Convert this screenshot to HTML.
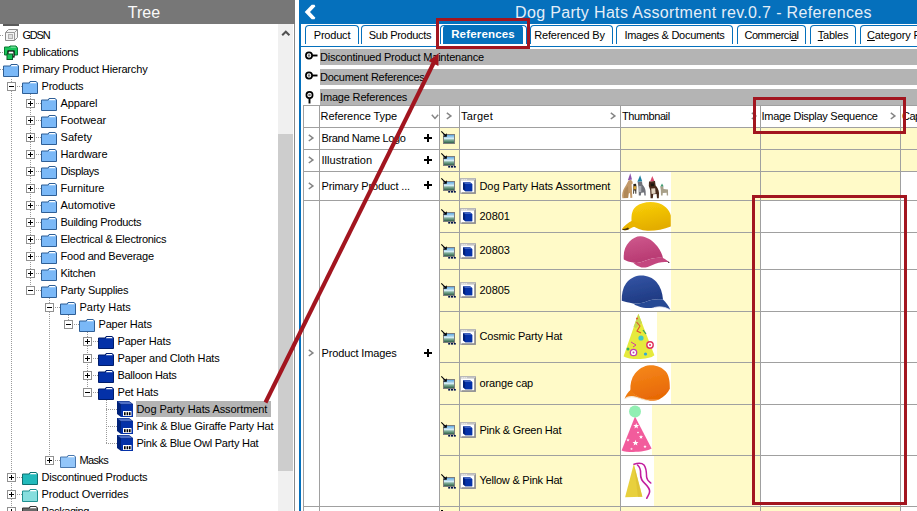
<!DOCTYPE html>
<html><head><meta charset="utf-8"><title>References</title>
<style>
html,body{margin:0;padding:0;}
body{width:917px;height:511px;overflow:hidden;background:#fff;position:relative;font-family:"Liberation Sans","DejaVu Sans",sans-serif;font-size:11px;color:#000;}
.a{position:absolute;}
.t{position:absolute;white-space:nowrap;line-height:17px;height:17px;letter-spacing:-0.12px;}
.hd{position:absolute;top:0;height:24px;line-height:24px;font-size:16px;white-space:nowrap;}
.tab{position:absolute;top:25px;height:19px;box-sizing:border-box;border:1px solid #0570bc;border-bottom:none;border-radius:4px 4px 0 0;background:#fff;text-align:center;line-height:19px;white-space:nowrap;letter-spacing:-0.12px;}
.band{position:absolute;left:320px;width:597px;height:16px;background:#b4b4b4;}
.y{position:absolute;background:#fffac8;}
.g{position:absolute;background:#a0a0a0;}
.w{position:absolute;background:#fff;}
.ch{position:absolute;color:#707070;font-size:11px;line-height:17px;}
svg{position:absolute;overflow:visible;}
</style></head>
<body>
<svg width="0" height="0" style="left:0;top:0"><defs><linearGradient id="pg" x1="0" y1="0" x2="0" y2="1"><stop offset="0" stop-color="#4f9fe0"/><stop offset="0.45" stop-color="#d4ecf4"/><stop offset="0.62" stop-color="#7fae98"/><stop offset="1" stop-color="#24553c"/></linearGradient></defs></svg>
<div class="a" style="left:0;top:0;width:295px;height:24px;background:#777"></div>
<div class="hd" style="left:0;top:1px;width:288px;text-align:center;color:#fafafa;">Tree</div>
<div class="a" style="left:278px;top:24px;width:15px;height:487px;background:#f0f0f0"></div>
<div class="a" style="left:278px;top:134px;width:15px;height:337px;background:#cdcdcd"></div>
<div class="a" style="left:294px;top:24px;width:1px;height:487px;background:#8a8a8a"></div>
<svg style="left:280px;top:29px" width="12" height="8" viewBox="0 0 12 8"><path d="M2.2 6.3 L5.8 2.7 L9.4 6.3" fill="none" stroke="#505050" stroke-width="2"/></svg>
<div class="a" style="left:3px;top:24px;width:16px;height:2px;background:#5a5a5a"></div>
<div class="a" style="left:11px;top:79px;width:1px;height:432px;background:repeating-linear-gradient(180deg,#9a9a9a 0 1px,transparent 1px 2px)"></div>
<div class="a" style="left:30px;top:94px;width:1px;height:196px;background:repeating-linear-gradient(180deg,#9a9a9a 0 1px,transparent 1px 2px)"></div>
<div class="a" style="left:49px;top:298px;width:1px;height:162px;background:repeating-linear-gradient(180deg,#9a9a9a 0 1px,transparent 1px 2px)"></div>
<div class="a" style="left:68px;top:315px;width:1px;height:9px;background:repeating-linear-gradient(180deg,#9a9a9a 0 1px,transparent 1px 2px)"></div>
<div class="a" style="left:87px;top:332px;width:1px;height:60px;background:repeating-linear-gradient(180deg,#9a9a9a 0 1px,transparent 1px 2px)"></div>
<div class="a" style="left:106px;top:400px;width:1px;height:44px;background:repeating-linear-gradient(180deg,#9a9a9a 0 1px,transparent 1px 2px)"></div>
<div class="a" style="left:0px;top:35px;width:3px;height:1px;background:repeating-linear-gradient(90deg,#9a9a9a 0 1px,transparent 1px 2px)"></div>
<svg style="left:5px;top:29px" width="13" height="12" viewBox="0 0 13 12"><path d="M0.5 3.5 L3.5 0.5 H12.5 V8.5 L9.5 11.5 H0.5 Z" fill="#f4f4f4" stroke="#8c8c8c"/><path d="M0.5 3.5 H9.5 V11.5 M9.5 3.5 L12.5 0.5" fill="none" stroke="#9a9a9a"/><rect x="3.5" y="5.5" width="4" height="4" fill="#e0e0e0" stroke="#b0b0b0"/></svg>
<div class="t" style="left:22.5px;top:27px;letter-spacing:-1.220px;">GDSN</div>
<div class="a" style="left:0px;top:52px;width:3px;height:1px;background:repeating-linear-gradient(90deg,#9a9a9a 0 1px,transparent 1px 2px)"></div>
<svg style="left:4px;top:45px" width="15" height="15" viewBox="0 0 15 15"><path d="M0.5 2 H5 L6 1 H12 L13.5 3 V10 H0.5 Z" fill="#19c45a" stroke="#0b7a33"/><path d="M7 1.8 H11.5 L12 2.6 H6.5Z" fill="#b8f0c8"/><rect x="4" y="6" width="6" height="6" fill="#fff" stroke="#000" stroke-width="1.2"/><rect x="3" y="9" width="5.5" height="5.5" fill="#19c45a" stroke="#0a5a25"/></svg>
<div class="t" style="left:22.5px;top:44px;letter-spacing:-0.286px;">Publications</div>
<div class="a" style="left:0px;top:69px;width:3px;height:1px;background:repeating-linear-gradient(90deg,#9a9a9a 0 1px,transparent 1px 2px)"></div>
<svg style="left:3px;top:64px" width="16" height="13" viewBox="0 0 16 13"><path d="M0.5 2 H7.2 L8 0.5 H14.2 L15.5 2 V12.5 H0.5 Z" fill="#7ab8f7" stroke="#2f5f96" stroke-width="1"/><path d="M8.6 1 H13.8 L14.7 2.2 H7.9 Z" fill="#fff"/></svg>
<div class="t" style="left:22.5px;top:61px;letter-spacing:-0.159px;">Primary Product Hierarchy</div>
<div class="a" style="left:11px;top:86px;width:11px;height:1px;background:repeating-linear-gradient(90deg,#9a9a9a 0 1px,transparent 1px 2px)"></div>
<svg style="left:7px;top:82px" width="9" height="9" viewBox="0 0 9 9"><rect x="0.5" y="0.5" width="8" height="8" fill="#fff" stroke="#919191"/><path d="M2 4.5 H7" stroke="#000"/></svg>
<svg style="left:22px;top:81px" width="16" height="13" viewBox="0 0 16 13"><path d="M0.5 2 H7.2 L8 0.5 H14.2 L15.5 2 V12.5 H0.5 Z" fill="#7ab8f7" stroke="#2f5f96" stroke-width="1"/><path d="M8.6 1 H13.8 L14.7 2.2 H7.9 Z" fill="#fff"/></svg>
<div class="t" style="left:41.5px;top:78px;letter-spacing:-0.190px;">Products</div>
<div class="a" style="left:30px;top:103px;width:11px;height:1px;background:repeating-linear-gradient(90deg,#9a9a9a 0 1px,transparent 1px 2px)"></div>
<svg style="left:26px;top:99px" width="9" height="9" viewBox="0 0 9 9"><rect x="0.5" y="0.5" width="8" height="8" fill="#fff" stroke="#919191"/><path d="M2 4.5 H7" stroke="#000"/><path d="M4.5 2 V7" stroke="#000"/></svg>
<svg style="left:41px;top:98px" width="16" height="13" viewBox="0 0 16 13"><path d="M0.5 2 H7.2 L8 0.5 H14.2 L15.5 2 V12.5 H0.5 Z" fill="#7ab8f7" stroke="#2f5f96" stroke-width="1"/><path d="M8.6 1 H13.8 L14.7 2.2 H7.9 Z" fill="#fff"/></svg>
<div class="t" style="left:60.5px;top:95px;letter-spacing:-0.146px;">Apparel</div>
<div class="a" style="left:30px;top:120px;width:11px;height:1px;background:repeating-linear-gradient(90deg,#9a9a9a 0 1px,transparent 1px 2px)"></div>
<svg style="left:26px;top:116px" width="9" height="9" viewBox="0 0 9 9"><rect x="0.5" y="0.5" width="8" height="8" fill="#fff" stroke="#919191"/><path d="M2 4.5 H7" stroke="#000"/><path d="M4.5 2 V7" stroke="#000"/></svg>
<svg style="left:41px;top:115px" width="16" height="13" viewBox="0 0 16 13"><path d="M0.5 2 H7.2 L8 0.5 H14.2 L15.5 2 V12.5 H0.5 Z" fill="#7ab8f7" stroke="#2f5f96" stroke-width="1"/><path d="M8.6 1 H13.8 L14.7 2.2 H7.9 Z" fill="#fff"/></svg>
<div class="t" style="left:60.5px;top:112px;letter-spacing:-0.032px;">Footwear</div>
<div class="a" style="left:30px;top:137px;width:11px;height:1px;background:repeating-linear-gradient(90deg,#9a9a9a 0 1px,transparent 1px 2px)"></div>
<svg style="left:26px;top:133px" width="9" height="9" viewBox="0 0 9 9"><rect x="0.5" y="0.5" width="8" height="8" fill="#fff" stroke="#919191"/><path d="M2 4.5 H7" stroke="#000"/><path d="M4.5 2 V7" stroke="#000"/></svg>
<svg style="left:41px;top:132px" width="16" height="13" viewBox="0 0 16 13"><path d="M0.5 2 H7.2 L8 0.5 H14.2 L15.5 2 V12.5 H0.5 Z" fill="#7ab8f7" stroke="#2f5f96" stroke-width="1"/><path d="M8.6 1 H13.8 L14.7 2.2 H7.9 Z" fill="#fff"/></svg>
<div class="t" style="left:60.5px;top:129px;letter-spacing:0.069px;">Safety</div>
<div class="a" style="left:30px;top:154px;width:11px;height:1px;background:repeating-linear-gradient(90deg,#9a9a9a 0 1px,transparent 1px 2px)"></div>
<svg style="left:26px;top:150px" width="9" height="9" viewBox="0 0 9 9"><rect x="0.5" y="0.5" width="8" height="8" fill="#fff" stroke="#919191"/><path d="M2 4.5 H7" stroke="#000"/><path d="M4.5 2 V7" stroke="#000"/></svg>
<svg style="left:41px;top:149px" width="16" height="13" viewBox="0 0 16 13"><path d="M0.5 2 H7.2 L8 0.5 H14.2 L15.5 2 V12.5 H0.5 Z" fill="#7ab8f7" stroke="#2f5f96" stroke-width="1"/><path d="M8.6 1 H13.8 L14.7 2.2 H7.9 Z" fill="#fff"/></svg>
<div class="t" style="left:60.5px;top:146px;letter-spacing:-0.098px;">Hardware</div>
<div class="a" style="left:30px;top:171px;width:11px;height:1px;background:repeating-linear-gradient(90deg,#9a9a9a 0 1px,transparent 1px 2px)"></div>
<svg style="left:26px;top:167px" width="9" height="9" viewBox="0 0 9 9"><rect x="0.5" y="0.5" width="8" height="8" fill="#fff" stroke="#919191"/><path d="M2 4.5 H7" stroke="#000"/><path d="M4.5 2 V7" stroke="#000"/></svg>
<svg style="left:41px;top:166px" width="16" height="13" viewBox="0 0 16 13"><path d="M0.5 2 H7.2 L8 0.5 H14.2 L15.5 2 V12.5 H0.5 Z" fill="#7ab8f7" stroke="#2f5f96" stroke-width="1"/><path d="M8.6 1 H13.8 L14.7 2.2 H7.9 Z" fill="#fff"/></svg>
<div class="t" style="left:60.5px;top:163px;letter-spacing:-0.385px;">Displays</div>
<div class="a" style="left:30px;top:188px;width:11px;height:1px;background:repeating-linear-gradient(90deg,#9a9a9a 0 1px,transparent 1px 2px)"></div>
<svg style="left:26px;top:184px" width="9" height="9" viewBox="0 0 9 9"><rect x="0.5" y="0.5" width="8" height="8" fill="#fff" stroke="#919191"/><path d="M2 4.5 H7" stroke="#000"/><path d="M4.5 2 V7" stroke="#000"/></svg>
<svg style="left:41px;top:183px" width="16" height="13" viewBox="0 0 16 13"><path d="M0.5 2 H7.2 L8 0.5 H14.2 L15.5 2 V12.5 H0.5 Z" fill="#7ab8f7" stroke="#2f5f96" stroke-width="1"/><path d="M8.6 1 H13.8 L14.7 2.2 H7.9 Z" fill="#fff"/></svg>
<div class="t" style="left:60.5px;top:180px;letter-spacing:-0.015px;">Furniture</div>
<div class="a" style="left:30px;top:205px;width:11px;height:1px;background:repeating-linear-gradient(90deg,#9a9a9a 0 1px,transparent 1px 2px)"></div>
<svg style="left:26px;top:201px" width="9" height="9" viewBox="0 0 9 9"><rect x="0.5" y="0.5" width="8" height="8" fill="#fff" stroke="#919191"/><path d="M2 4.5 H7" stroke="#000"/><path d="M4.5 2 V7" stroke="#000"/></svg>
<svg style="left:41px;top:200px" width="16" height="13" viewBox="0 0 16 13"><path d="M0.5 2 H7.2 L8 0.5 H14.2 L15.5 2 V12.5 H0.5 Z" fill="#7ab8f7" stroke="#2f5f96" stroke-width="1"/><path d="M8.6 1 H13.8 L14.7 2.2 H7.9 Z" fill="#fff"/></svg>
<div class="t" style="left:60.5px;top:197px;letter-spacing:-0.013px;">Automotive</div>
<div class="a" style="left:30px;top:222px;width:11px;height:1px;background:repeating-linear-gradient(90deg,#9a9a9a 0 1px,transparent 1px 2px)"></div>
<svg style="left:26px;top:218px" width="9" height="9" viewBox="0 0 9 9"><rect x="0.5" y="0.5" width="8" height="8" fill="#fff" stroke="#919191"/><path d="M2 4.5 H7" stroke="#000"/><path d="M4.5 2 V7" stroke="#000"/></svg>
<svg style="left:41px;top:217px" width="16" height="13" viewBox="0 0 16 13"><path d="M0.5 2 H7.2 L8 0.5 H14.2 L15.5 2 V12.5 H0.5 Z" fill="#7ab8f7" stroke="#2f5f96" stroke-width="1"/><path d="M8.6 1 H13.8 L14.7 2.2 H7.9 Z" fill="#fff"/></svg>
<div class="t" style="left:60.5px;top:214px;letter-spacing:-0.283px;">Building Products</div>
<div class="a" style="left:30px;top:239px;width:11px;height:1px;background:repeating-linear-gradient(90deg,#9a9a9a 0 1px,transparent 1px 2px)"></div>
<svg style="left:26px;top:235px" width="9" height="9" viewBox="0 0 9 9"><rect x="0.5" y="0.5" width="8" height="8" fill="#fff" stroke="#919191"/><path d="M2 4.5 H7" stroke="#000"/><path d="M4.5 2 V7" stroke="#000"/></svg>
<svg style="left:41px;top:234px" width="16" height="13" viewBox="0 0 16 13"><path d="M0.5 2 H7.2 L8 0.5 H14.2 L15.5 2 V12.5 H0.5 Z" fill="#7ab8f7" stroke="#2f5f96" stroke-width="1"/><path d="M8.6 1 H13.8 L14.7 2.2 H7.9 Z" fill="#fff"/></svg>
<div class="t" style="left:60.5px;top:231px;letter-spacing:-0.253px;">Electrical &amp; Electronics</div>
<div class="a" style="left:30px;top:256px;width:11px;height:1px;background:repeating-linear-gradient(90deg,#9a9a9a 0 1px,transparent 1px 2px)"></div>
<svg style="left:26px;top:252px" width="9" height="9" viewBox="0 0 9 9"><rect x="0.5" y="0.5" width="8" height="8" fill="#fff" stroke="#919191"/><path d="M2 4.5 H7" stroke="#000"/><path d="M4.5 2 V7" stroke="#000"/></svg>
<svg style="left:41px;top:251px" width="16" height="13" viewBox="0 0 16 13"><path d="M0.5 2 H7.2 L8 0.5 H14.2 L15.5 2 V12.5 H0.5 Z" fill="#7ab8f7" stroke="#2f5f96" stroke-width="1"/><path d="M8.6 1 H13.8 L14.7 2.2 H7.9 Z" fill="#fff"/></svg>
<div class="t" style="left:60.5px;top:248px;letter-spacing:-0.191px;">Food and Beverage</div>
<div class="a" style="left:30px;top:273px;width:11px;height:1px;background:repeating-linear-gradient(90deg,#9a9a9a 0 1px,transparent 1px 2px)"></div>
<svg style="left:26px;top:269px" width="9" height="9" viewBox="0 0 9 9"><rect x="0.5" y="0.5" width="8" height="8" fill="#fff" stroke="#919191"/><path d="M2 4.5 H7" stroke="#000"/><path d="M4.5 2 V7" stroke="#000"/></svg>
<svg style="left:41px;top:268px" width="16" height="13" viewBox="0 0 16 13"><path d="M0.5 2 H7.2 L8 0.5 H14.2 L15.5 2 V12.5 H0.5 Z" fill="#7ab8f7" stroke="#2f5f96" stroke-width="1"/><path d="M8.6 1 H13.8 L14.7 2.2 H7.9 Z" fill="#fff"/></svg>
<div class="t" style="left:60.5px;top:265px;letter-spacing:-0.258px;">Kitchen</div>
<div class="a" style="left:30px;top:290px;width:11px;height:1px;background:repeating-linear-gradient(90deg,#9a9a9a 0 1px,transparent 1px 2px)"></div>
<svg style="left:26px;top:286px" width="9" height="9" viewBox="0 0 9 9"><rect x="0.5" y="0.5" width="8" height="8" fill="#fff" stroke="#919191"/><path d="M2 4.5 H7" stroke="#000"/></svg>
<svg style="left:41px;top:285px" width="16" height="13" viewBox="0 0 16 13"><path d="M0.5 2 H7.2 L8 0.5 H14.2 L15.5 2 V12.5 H0.5 Z" fill="#7ab8f7" stroke="#2f5f96" stroke-width="1"/><path d="M8.6 1 H13.8 L14.7 2.2 H7.9 Z" fill="#fff"/></svg>
<div class="t" style="left:60.5px;top:282px;letter-spacing:-0.224px;">Party Supplies</div>
<div class="a" style="left:49px;top:307px;width:11px;height:1px;background:repeating-linear-gradient(90deg,#9a9a9a 0 1px,transparent 1px 2px)"></div>
<svg style="left:45px;top:303px" width="9" height="9" viewBox="0 0 9 9"><rect x="0.5" y="0.5" width="8" height="8" fill="#fff" stroke="#919191"/><path d="M2 4.5 H7" stroke="#000"/></svg>
<svg style="left:60px;top:302px" width="16" height="13" viewBox="0 0 16 13"><path d="M0.5 2 H7.2 L8 0.5 H14.2 L15.5 2 V12.5 H0.5 Z" fill="#7ab8f7" stroke="#2f5f96" stroke-width="1"/><path d="M8.6 1 H13.8 L14.7 2.2 H7.9 Z" fill="#fff"/></svg>
<div class="t" style="left:79.5px;top:299px;letter-spacing:-0.006px;">Party Hats</div>
<div class="a" style="left:68px;top:324px;width:11px;height:1px;background:repeating-linear-gradient(90deg,#9a9a9a 0 1px,transparent 1px 2px)"></div>
<svg style="left:64px;top:320px" width="9" height="9" viewBox="0 0 9 9"><rect x="0.5" y="0.5" width="8" height="8" fill="#fff" stroke="#919191"/><path d="M2 4.5 H7" stroke="#000"/></svg>
<svg style="left:79px;top:319px" width="16" height="13" viewBox="0 0 16 13"><path d="M0.5 2 H7.2 L8 0.5 H14.2 L15.5 2 V12.5 H0.5 Z" fill="#7ab8f7" stroke="#2f5f96" stroke-width="1"/><path d="M8.6 1 H13.8 L14.7 2.2 H7.9 Z" fill="#fff"/></svg>
<div class="t" style="left:98.5px;top:316px;letter-spacing:-0.183px;">Paper Hats</div>
<div class="a" style="left:87px;top:341px;width:11px;height:1px;background:repeating-linear-gradient(90deg,#9a9a9a 0 1px,transparent 1px 2px)"></div>
<svg style="left:83px;top:337px" width="9" height="9" viewBox="0 0 9 9"><rect x="0.5" y="0.5" width="8" height="8" fill="#fff" stroke="#919191"/><path d="M2 4.5 H7" stroke="#000"/><path d="M4.5 2 V7" stroke="#000"/></svg>
<svg style="left:98px;top:336px" width="16" height="13" viewBox="0 0 16 13"><path d="M0.5 2 H7.2 L8 0.5 H14.2 L15.5 2 V12.5 H0.5 Z" fill="#0431a8" stroke="#001c6a" stroke-width="1"/><path d="M8.6 1 H13.8 L14.7 2.2 H7.9 Z" fill="#fff"/></svg>
<div class="t" style="left:117.5px;top:333px;letter-spacing:-0.183px;">Paper Hats</div>
<div class="a" style="left:87px;top:358px;width:11px;height:1px;background:repeating-linear-gradient(90deg,#9a9a9a 0 1px,transparent 1px 2px)"></div>
<svg style="left:83px;top:354px" width="9" height="9" viewBox="0 0 9 9"><rect x="0.5" y="0.5" width="8" height="8" fill="#fff" stroke="#919191"/><path d="M2 4.5 H7" stroke="#000"/><path d="M4.5 2 V7" stroke="#000"/></svg>
<svg style="left:98px;top:353px" width="16" height="13" viewBox="0 0 16 13"><path d="M0.5 2 H7.2 L8 0.5 H14.2 L15.5 2 V12.5 H0.5 Z" fill="#0431a8" stroke="#001c6a" stroke-width="1"/><path d="M8.6 1 H13.8 L14.7 2.2 H7.9 Z" fill="#fff"/></svg>
<div class="t" style="left:117.5px;top:350px;letter-spacing:-0.154px;">Paper and Cloth Hats</div>
<div class="a" style="left:87px;top:375px;width:11px;height:1px;background:repeating-linear-gradient(90deg,#9a9a9a 0 1px,transparent 1px 2px)"></div>
<svg style="left:83px;top:371px" width="9" height="9" viewBox="0 0 9 9"><rect x="0.5" y="0.5" width="8" height="8" fill="#fff" stroke="#919191"/><path d="M2 4.5 H7" stroke="#000"/><path d="M4.5 2 V7" stroke="#000"/></svg>
<svg style="left:98px;top:370px" width="16" height="13" viewBox="0 0 16 13"><path d="M0.5 2 H7.2 L8 0.5 H14.2 L15.5 2 V12.5 H0.5 Z" fill="#0431a8" stroke="#001c6a" stroke-width="1"/><path d="M8.6 1 H13.8 L14.7 2.2 H7.9 Z" fill="#fff"/></svg>
<div class="t" style="left:117.5px;top:367px;letter-spacing:-0.290px;">Balloon Hats</div>
<div class="a" style="left:87px;top:392px;width:11px;height:1px;background:repeating-linear-gradient(90deg,#9a9a9a 0 1px,transparent 1px 2px)"></div>
<svg style="left:83px;top:388px" width="9" height="9" viewBox="0 0 9 9"><rect x="0.5" y="0.5" width="8" height="8" fill="#fff" stroke="#919191"/><path d="M2 4.5 H7" stroke="#000"/></svg>
<svg style="left:98px;top:387px" width="16" height="13" viewBox="0 0 16 13"><path d="M0.5 2 H7.2 L8 0.5 H14.2 L15.5 2 V12.5 H0.5 Z" fill="#0431a8" stroke="#001c6a" stroke-width="1"/><path d="M8.6 1 H13.8 L14.7 2.2 H7.9 Z" fill="#fff"/></svg>
<div class="t" style="left:117.5px;top:384px;letter-spacing:-0.173px;">Pet Hats</div>
<div class="a" style="left:106px;top:409px;width:11px;height:1px;background:repeating-linear-gradient(90deg,#9a9a9a 0 1px,transparent 1px 2px)"></div>
<svg style="left:117px;top:401px" width="16" height="16" viewBox="0 0 16 16"><path d="M0 0 H12 L16 3 V16 H4 L0 13 Z" fill="#00227a"/><path d="M0.5 0.5 H12 L15.5 3.2 H4 Z" fill="#4f6fc4"/><rect x="4" y="3.5" width="12" height="12.5" fill="#0431a8"/><rect x="6" y="10" width="8.5" height="5" fill="#fff"/><rect x="7" y="11.2" width="1.6" height="3" fill="#000"/><rect x="9.6" y="11.2" width="1.6" height="3" fill="#000"/><rect x="12" y="11.2" width="1.6" height="3" fill="#000"/></svg>
<div class="a" style="left:136px;top:401px;width:135px;height:16px;background:#b4b4b4"></div>
<div class="t" style="left:136.5px;top:401px;letter-spacing:-0.075px;">Dog Party Hats Assortment</div>
<div class="a" style="left:106px;top:426px;width:11px;height:1px;background:repeating-linear-gradient(90deg,#9a9a9a 0 1px,transparent 1px 2px)"></div>
<svg style="left:117px;top:418px" width="16" height="16" viewBox="0 0 16 16"><path d="M0 0 H12 L16 3 V16 H4 L0 13 Z" fill="#00227a"/><path d="M0.5 0.5 H12 L15.5 3.2 H4 Z" fill="#4f6fc4"/><rect x="4" y="3.5" width="12" height="12.5" fill="#0431a8"/><rect x="6" y="10" width="8.5" height="5" fill="#fff"/><rect x="7" y="11.2" width="1.6" height="3" fill="#000"/><rect x="9.6" y="11.2" width="1.6" height="3" fill="#000"/><rect x="12" y="11.2" width="1.6" height="3" fill="#000"/></svg>
<div class="t" style="left:136.5px;top:418px;letter-spacing:-0.163px;">Pink &amp; Blue Giraffe Party Hat</div>
<div class="a" style="left:106px;top:443px;width:11px;height:1px;background:repeating-linear-gradient(90deg,#9a9a9a 0 1px,transparent 1px 2px)"></div>
<svg style="left:117px;top:435px" width="16" height="16" viewBox="0 0 16 16"><path d="M0 0 H12 L16 3 V16 H4 L0 13 Z" fill="#00227a"/><path d="M0.5 0.5 H12 L15.5 3.2 H4 Z" fill="#4f6fc4"/><rect x="4" y="3.5" width="12" height="12.5" fill="#0431a8"/><rect x="6" y="10" width="8.5" height="5" fill="#fff"/><rect x="7" y="11.2" width="1.6" height="3" fill="#000"/><rect x="9.6" y="11.2" width="1.6" height="3" fill="#000"/><rect x="12" y="11.2" width="1.6" height="3" fill="#000"/></svg>
<div class="t" style="left:136.5px;top:435px;letter-spacing:-0.235px;">Pink &amp; Blue Owl Party Hat</div>
<div class="a" style="left:49px;top:460px;width:11px;height:1px;background:repeating-linear-gradient(90deg,#9a9a9a 0 1px,transparent 1px 2px)"></div>
<svg style="left:45px;top:456px" width="9" height="9" viewBox="0 0 9 9"><rect x="0.5" y="0.5" width="8" height="8" fill="#fff" stroke="#919191"/><path d="M2 4.5 H7" stroke="#000"/><path d="M4.5 2 V7" stroke="#000"/></svg>
<svg style="left:60px;top:455px" width="16" height="13" viewBox="0 0 16 13"><path d="M0.5 2 H7.2 L8 0.5 H14.2 L15.5 2 V12.5 H0.5 Z" fill="#93c6f9" stroke="#4a78ad" stroke-width="1"/><path d="M8.6 1 H13.8 L14.7 2.2 H7.9 Z" fill="#fff"/></svg>
<div class="t" style="left:79.5px;top:452px;letter-spacing:-0.656px;">Masks</div>
<div class="a" style="left:11px;top:477px;width:11px;height:1px;background:repeating-linear-gradient(90deg,#9a9a9a 0 1px,transparent 1px 2px)"></div>
<svg style="left:7px;top:473px" width="9" height="9" viewBox="0 0 9 9"><rect x="0.5" y="0.5" width="8" height="8" fill="#fff" stroke="#919191"/><path d="M2 4.5 H7" stroke="#000"/><path d="M4.5 2 V7" stroke="#000"/></svg>
<svg style="left:22px;top:472px" width="16" height="13" viewBox="0 0 16 13"><path d="M0.5 2 H7.2 L8 0.5 H14.2 L15.5 2 V12.5 H0.5 Z" fill="#22babb" stroke="#0e7070" stroke-width="1"/><path d="M8.6 1 H13.8 L14.7 2.2 H7.9 Z" fill="#fff"/></svg>
<div class="t" style="left:41.5px;top:469px;letter-spacing:-0.203px;">Discontinued Products</div>
<div class="a" style="left:11px;top:494px;width:11px;height:1px;background:repeating-linear-gradient(90deg,#9a9a9a 0 1px,transparent 1px 2px)"></div>
<svg style="left:7px;top:490px" width="9" height="9" viewBox="0 0 9 9"><rect x="0.5" y="0.5" width="8" height="8" fill="#fff" stroke="#919191"/><path d="M2 4.5 H7" stroke="#000"/><path d="M4.5 2 V7" stroke="#000"/></svg>
<svg style="left:22px;top:489px" width="16" height="13" viewBox="0 0 16 13"><path d="M0.5 2 H7.2 L8 0.5 H14.2 L15.5 2 V12.5 H0.5 Z" fill="#86dede" stroke="#1f9090" stroke-width="1"/><path d="M8.6 1 H13.8 L14.7 2.2 H7.9 Z" fill="#fff"/></svg>
<div class="t" style="left:41.5px;top:486px;letter-spacing:-0.097px;">Product Overrides</div>
<div class="a" style="left:11px;top:511px;width:11px;height:1px;background:repeating-linear-gradient(90deg,#9a9a9a 0 1px,transparent 1px 2px)"></div>
<svg style="left:7px;top:507px" width="9" height="9" viewBox="0 0 9 9"><rect x="0.5" y="0.5" width="8" height="8" fill="#fff" stroke="#919191"/><path d="M2 4.5 H7" stroke="#000"/><path d="M4.5 2 V7" stroke="#000"/></svg>
<svg style="left:22px;top:506px" width="16" height="13" viewBox="0 0 16 13"><path d="M0.5 2 H7.2 L8 0.5 H14.2 L15.5 2 V12.5 H0.5 Z" fill="#6a6a6a" stroke="#333" stroke-width="1"/><path d="M8.6 1 H13.8 L14.7 2.2 H7.9 Z" fill="#fff"/></svg>
<div class="t" style="left:41.5px;top:503px;letter-spacing:-0.431px;">Packaging</div>
<div class="a" style="left:299px;top:0;width:618px;height:24px;background:#0570bc"></div>
<div class="a" style="left:299px;top:0;width:2px;height:511px;background:#0570bc"></div>
<svg style="left:0;top:0" width="330" height="24" viewBox="0 0 330 24"><path d="M304.7 12 L311.7 4.8 H314.5 L315.4 6.3 L310 12 L315.4 17.7 L314.5 19.2 H311.7 Z" fill="#fff"/></svg>
<div class="hd" style="left:515px;color:#e4eef8;font-size:16px;letter-spacing:0.34px;top:1px;">Dog Party Hats Assortment rev.0.7 - References</div>
<div class="a" style="left:301px;top:46px;width:616px;height:1px;background:#0570bc"></div>
<div class="tab" style="left:305px;width:54px;letter-spacing:-0.203px;">Product</div>
<div class="tab" style="left:361px;width:78px;letter-spacing:-0.312px;">Sub Products</div>
<div class="tab" style="left:440px;width:87px;"></div>
<div class="tab" style="left:443px;width:80px;background:#0570bc;color:#fff;font-weight:bold;border-radius:4px 4px 0 0;letter-spacing:0.17px;font-size:11.5px;line-height:17px;">References</div>
<div class="tab" style="left:530px;width:83px;padding-right:4px;letter-spacing:-0.167px;">Referenced By</div>
<div class="tab" style="left:616px;width:117px;letter-spacing:-0.275px;">Images &amp; Documents</div>
<div class="tab" style="left:737px;width:69px;letter-spacing:-0.459px;">Commerci<u>a</u>l</div>
<div class="tab" style="left:810px;width:46px;letter-spacing:-0.216px;"><u>T</u>ables</div>
<div class="tab" style="left:860px;width:70px;text-align:left;padding-left:6px"><u>C</u>ategory F</div>
<div class="band" style="top:49px"></div>
<div class="t" style="left:320px;top:49px;letter-spacing:-0.207px;">Discontinued Product Maintenance</div>
<div class="band" style="top:69px"></div>
<div class="t" style="left:320px;top:69px;letter-spacing:-0.255px;">Document References</div>
<div class="band" style="top:89px"></div>
<div class="t" style="left:320px;top:89px;letter-spacing:-0.168px;">Image References</div>
<svg style="left:305px;top:51px" width="13" height="9" viewBox="0 0 13 9"><circle cx="4" cy="4.5" r="3.1" fill="#fff" stroke="#000" stroke-width="1.7"/><circle cx="4" cy="4.5" r="1.3" fill="#777"/><path d="M7 4.5 H12.5" stroke="#000" stroke-width="1.9"/></svg>
<svg style="left:305px;top:71px" width="13" height="9" viewBox="0 0 13 9"><circle cx="4" cy="4.5" r="3.1" fill="#fff" stroke="#000" stroke-width="1.7"/><circle cx="4" cy="4.5" r="1.3" fill="#777"/><path d="M7 4.5 H12.5" stroke="#000" stroke-width="1.9"/></svg>
<svg style="left:305px;top:91px" width="9" height="13" viewBox="0 0 9 13"><circle cx="4.5" cy="4" r="3.1" fill="#fff" stroke="#000" stroke-width="1.7"/><circle cx="4.5" cy="4" r="1.3" fill="#777"/><path d="M4.5 7 V12.5" stroke="#000" stroke-width="1.9"/></svg>
<div class="y" style="left:439px;top:127px;width:20px;height:384px"></div>
<div class="y" style="left:459px;top:171px;width:161px;height:340px"></div>
<div class="y" style="left:620px;top:127px;width:140px;height:384px"></div>
<div class="y" style="left:760px;top:127px;width:140px;height:73px"></div>
<div class="y" style="left:760px;top:506px;width:140px;height:5px"></div>
<div class="y" style="left:900px;top:127px;width:17px;height:44px"></div>
<div class="g" style="left:303px;top:105px;width:1px;height:406px"></div>
<div class="g" style="left:319px;top:105px;width:1px;height:406px"></div>
<div class="g" style="left:439px;top:105px;width:1px;height:406px"></div>
<div class="g" style="left:459px;top:105px;width:1px;height:406px"></div>
<div class="g" style="left:620px;top:105px;width:1px;height:406px"></div>
<div class="g" style="left:760px;top:105px;width:1px;height:406px"></div>
<div class="g" style="left:900px;top:105px;width:1px;height:406px"></div>
<div class="g" style="left:303px;top:105px;width:614px;height:1px"></div>
<div class="g" style="left:303px;top:127px;width:614px;height:1px"></div>
<div class="g" style="left:303px;top:149px;width:614px;height:1px"></div>
<div class="g" style="left:303px;top:171px;width:614px;height:1px"></div>
<div class="g" style="left:303px;top:200px;width:614px;height:1px"></div>
<div class="g" style="left:439px;top:232px;width:478px;height:1px"></div>
<div class="g" style="left:439px;top:269px;width:478px;height:1px"></div>
<div class="g" style="left:439px;top:311px;width:478px;height:1px"></div>
<div class="g" style="left:439px;top:362px;width:478px;height:1px"></div>
<div class="g" style="left:439px;top:404px;width:478px;height:1px"></div>
<div class="g" style="left:439px;top:455px;width:478px;height:1px"></div>
<div class="g" style="left:303px;top:506px;width:614px;height:1px"></div>
<div class="t" style="left:320.5px;top:108px;letter-spacing:-0.055px;">Reference Type</div>
<svg style="left:430.5px;top:113.6px" width="8" height="6" viewBox="0 0 8 6"><path d="M0.8 0.8 L4 4.4 L7.2 0.8" fill="none" stroke="#858585" stroke-width="1.5"/></svg>
<svg style="left:446px;top:111.6px" width="6" height="8" viewBox="0 0 6 8"><path d="M0.8 0.8 L4.9 3.9 L0.8 7" fill="none" stroke="#858585" stroke-width="1.5"/></svg>
<div class="t" style="left:461px;top:108px;letter-spacing:0.237px;">Target</div>
<svg style="left:610px;top:111.6px" width="6" height="8" viewBox="0 0 6 8"><path d="M0.8 0.8 L4.9 3.9 L0.8 7" fill="none" stroke="#858585" stroke-width="1.5"/></svg>
<div class="t" style="left:622px;top:108px;letter-spacing:-0.407px;">Thumbnail</div>
<svg style="left:751px;top:111.6px" width="6" height="8" viewBox="0 0 6 8"><path d="M0.8 0.8 L4.9 3.9 L0.8 7" fill="none" stroke="#858585" stroke-width="1.5"/></svg>
<div class="t" style="left:761.5px;top:108px;letter-spacing:-0.277px;">Image Display Sequence</div>
<svg style="left:890px;top:111.6px" width="6" height="8" viewBox="0 0 6 8"><path d="M0.8 0.8 L4.9 3.9 L0.8 7" fill="none" stroke="#858585" stroke-width="1.5"/></svg>
<div class="t" style="left:902px;top:108px;letter-spacing:-0.5px;">Cap</div>
<svg style="left:308px;top:134.1px" width="6" height="8" viewBox="0 0 6 8"><path d="M0.8 0.8 L4.9 3.9 L0.8 7" fill="none" stroke="#858585" stroke-width="1.5"/></svg>
<div class="t" style="left:321.5px;top:130.0px;letter-spacing:-0.345px;">Brand Name Logo</div>
<svg style="left:424px;top:134px" width="8" height="8" viewBox="0 0 8 8"><path d="M0 4 H8 M4 0 V8" stroke="#000" stroke-width="2"/></svg>
<svg style="left:308px;top:156.1px" width="6" height="8" viewBox="0 0 6 8"><path d="M0.8 0.8 L4.9 3.9 L0.8 7" fill="none" stroke="#858585" stroke-width="1.5"/></svg>
<div class="t" style="left:321.5px;top:152.0px;letter-spacing:0.038px;">Illustration</div>
<svg style="left:424px;top:156px" width="8" height="8" viewBox="0 0 8 8"><path d="M0 4 H8 M4 0 V8" stroke="#000" stroke-width="2"/></svg>
<svg style="left:308px;top:181.6px" width="6" height="8" viewBox="0 0 6 8"><path d="M0.8 0.8 L4.9 3.9 L0.8 7" fill="none" stroke="#858585" stroke-width="1.5"/></svg>
<div class="t" style="left:321.5px;top:177.5px;letter-spacing:-0.136px;">Primary Product ...</div>
<svg style="left:424px;top:181px" width="8" height="8" viewBox="0 0 8 8"><path d="M0 4 H8 M4 0 V8" stroke="#000" stroke-width="2"/></svg>
<svg style="left:308px;top:349.1px" width="6" height="8" viewBox="0 0 6 8"><path d="M0.8 0.8 L4.9 3.9 L0.8 7" fill="none" stroke="#858585" stroke-width="1.5"/></svg>
<div class="t" style="left:321.5px;top:345.0px;letter-spacing:-0.139px;">Product Images</div>
<svg style="left:424px;top:349px" width="8" height="8" viewBox="0 0 8 8"><path d="M0 4 H8 M4 0 V8" stroke="#000" stroke-width="2"/></svg>
<svg style="left:441px;top:131px" width="16" height="15" viewBox="0 0 16 15"><rect x="2.5" y="3.5" width="11" height="9" fill="url(#pg)" stroke="#7d7d7d"/><path d="M0.3 0.3 L4.6 4.6" stroke="#000" stroke-width="1.1"/><path d="M5.8 2.2 V5.8 H2.2 Z" fill="#000"/></svg>
<svg style="left:441px;top:153px" width="16" height="15" viewBox="0 0 16 15"><rect x="2.5" y="3.5" width="11" height="9" fill="url(#pg)" stroke="#7d7d7d"/><path d="M0.3 0.3 L4.6 4.6" stroke="#000" stroke-width="1.1"/><path d="M5.8 2.2 V5.8 H2.2 Z" fill="#000"/><rect x="7.2" y="13" width="2" height="1.6" fill="#00124d"/><rect x="10" y="13" width="2" height="1.6" fill="#00124d"/><rect x="12.8" y="13" width="2" height="1.6" fill="#00124d"/></svg>
<svg style="left:441px;top:178px" width="16" height="15" viewBox="0 0 16 15"><rect x="2.5" y="3.5" width="11" height="9" fill="url(#pg)" stroke="#7d7d7d"/><path d="M0.3 0.3 L4.6 4.6" stroke="#000" stroke-width="1.1"/><path d="M5.8 2.2 V5.8 H2.2 Z" fill="#000"/><rect x="7.2" y="13" width="2" height="1.6" fill="#00124d"/><rect x="10" y="13" width="2" height="1.6" fill="#00124d"/><rect x="12.8" y="13" width="2" height="1.6" fill="#00124d"/></svg>
<svg style="left:460px;top:178px" width="16" height="16" viewBox="0 0 16 16"><rect x="0.5" y="0.5" width="15" height="15" fill="#fff" stroke="#b8b8b8"/><path d="M15 1.5 V15 H1.5" fill="none" stroke="#8a8a8a" stroke-width="1.6"/><rect x="1" y="1" width="13.4" height="1.6" fill="#c4c4c4"/><rect x="1.6" y="1.2" width="1.1" height="1.1" fill="#fff"/><rect x="3.6" y="1.2" width="1.1" height="1.1" fill="#fff"/><rect x="5.6" y="1.2" width="1.1" height="1.1" fill="#fff"/><path d="M3 4.2 H10 L12.2 6 V13.2 H5.2 L3 11.4 Z" fill="#001f78"/><path d="M3 4.2 H10 L12.2 6 H5.2 Z" fill="#3f63c4"/><rect x="5.2" y="6" width="7" height="7.2" fill="#0431a8"/></svg>
<div class="t" style="left:479.5px;top:178px;letter-spacing:-0.075px;">Dog Party Hats Assortment</div>
<svg style="left:441px;top:209px" width="16" height="15" viewBox="0 0 16 15"><rect x="2.5" y="3.5" width="11" height="9" fill="url(#pg)" stroke="#7d7d7d"/><path d="M0.3 0.3 L4.6 4.6" stroke="#000" stroke-width="1.1"/><path d="M5.8 2.2 V5.8 H2.2 Z" fill="#000"/><rect x="7.2" y="13" width="2" height="1.6" fill="#00124d"/><rect x="10" y="13" width="2" height="1.6" fill="#00124d"/><rect x="12.8" y="13" width="2" height="1.6" fill="#00124d"/></svg>
<svg style="left:460px;top:208px" width="16" height="16" viewBox="0 0 16 16"><rect x="0.5" y="0.5" width="15" height="15" fill="#fff" stroke="#b8b8b8"/><path d="M15 1.5 V15 H1.5" fill="none" stroke="#8a8a8a" stroke-width="1.6"/><rect x="1" y="1" width="13.4" height="1.6" fill="#c4c4c4"/><rect x="1.6" y="1.2" width="1.1" height="1.1" fill="#fff"/><rect x="3.6" y="1.2" width="1.1" height="1.1" fill="#fff"/><rect x="5.6" y="1.2" width="1.1" height="1.1" fill="#fff"/><path d="M3 4.2 H10 L12.2 6 V13.2 H5.2 L3 11.4 Z" fill="#001f78"/><path d="M3 4.2 H10 L12.2 6 H5.2 Z" fill="#3f63c4"/><rect x="5.2" y="6" width="7" height="7.2" fill="#0431a8"/></svg>
<div class="t" style="left:479.5px;top:208px;letter-spacing:-0.039px;">20801</div>
<svg style="left:441px;top:244px" width="16" height="15" viewBox="0 0 16 15"><rect x="2.5" y="3.5" width="11" height="9" fill="url(#pg)" stroke="#7d7d7d"/><path d="M0.3 0.3 L4.6 4.6" stroke="#000" stroke-width="1.1"/><path d="M5.8 2.2 V5.8 H2.2 Z" fill="#000"/><rect x="7.2" y="13" width="2" height="1.6" fill="#00124d"/><rect x="10" y="13" width="2" height="1.6" fill="#00124d"/><rect x="12.8" y="13" width="2" height="1.6" fill="#00124d"/></svg>
<svg style="left:460px;top:243px" width="16" height="16" viewBox="0 0 16 16"><rect x="0.5" y="0.5" width="15" height="15" fill="#fff" stroke="#b8b8b8"/><path d="M15 1.5 V15 H1.5" fill="none" stroke="#8a8a8a" stroke-width="1.6"/><rect x="1" y="1" width="13.4" height="1.6" fill="#c4c4c4"/><rect x="1.6" y="1.2" width="1.1" height="1.1" fill="#fff"/><rect x="3.6" y="1.2" width="1.1" height="1.1" fill="#fff"/><rect x="5.6" y="1.2" width="1.1" height="1.1" fill="#fff"/><path d="M3 4.2 H10 L12.2 6 V13.2 H5.2 L3 11.4 Z" fill="#001f78"/><path d="M3 4.2 H10 L12.2 6 H5.2 Z" fill="#3f63c4"/><rect x="5.2" y="6" width="7" height="7.2" fill="#0431a8"/></svg>
<div class="t" style="left:479.5px;top:242px;letter-spacing:-0.039px;">20803</div>
<svg style="left:441px;top:283px" width="16" height="15" viewBox="0 0 16 15"><rect x="2.5" y="3.5" width="11" height="9" fill="url(#pg)" stroke="#7d7d7d"/><path d="M0.3 0.3 L4.6 4.6" stroke="#000" stroke-width="1.1"/><path d="M5.8 2.2 V5.8 H2.2 Z" fill="#000"/><rect x="7.2" y="13" width="2" height="1.6" fill="#00124d"/><rect x="10" y="13" width="2" height="1.6" fill="#00124d"/><rect x="12.8" y="13" width="2" height="1.6" fill="#00124d"/></svg>
<svg style="left:460px;top:282px" width="16" height="16" viewBox="0 0 16 16"><rect x="0.5" y="0.5" width="15" height="15" fill="#fff" stroke="#b8b8b8"/><path d="M15 1.5 V15 H1.5" fill="none" stroke="#8a8a8a" stroke-width="1.6"/><rect x="1" y="1" width="13.4" height="1.6" fill="#c4c4c4"/><rect x="1.6" y="1.2" width="1.1" height="1.1" fill="#fff"/><rect x="3.6" y="1.2" width="1.1" height="1.1" fill="#fff"/><rect x="5.6" y="1.2" width="1.1" height="1.1" fill="#fff"/><path d="M3 4.2 H10 L12.2 6 V13.2 H5.2 L3 11.4 Z" fill="#001f78"/><path d="M3 4.2 H10 L12.2 6 H5.2 Z" fill="#3f63c4"/><rect x="5.2" y="6" width="7" height="7.2" fill="#0431a8"/></svg>
<div class="t" style="left:479.5px;top:282px;letter-spacing:-0.039px;">20805</div>
<svg style="left:441px;top:330px" width="16" height="15" viewBox="0 0 16 15"><rect x="2.5" y="3.5" width="11" height="9" fill="url(#pg)" stroke="#7d7d7d"/><path d="M0.3 0.3 L4.6 4.6" stroke="#000" stroke-width="1.1"/><path d="M5.8 2.2 V5.8 H2.2 Z" fill="#000"/><rect x="7.2" y="13" width="2" height="1.6" fill="#00124d"/><rect x="10" y="13" width="2" height="1.6" fill="#00124d"/><rect x="12.8" y="13" width="2" height="1.6" fill="#00124d"/></svg>
<svg style="left:460px;top:329px" width="16" height="16" viewBox="0 0 16 16"><rect x="0.5" y="0.5" width="15" height="15" fill="#fff" stroke="#b8b8b8"/><path d="M15 1.5 V15 H1.5" fill="none" stroke="#8a8a8a" stroke-width="1.6"/><rect x="1" y="1" width="13.4" height="1.6" fill="#c4c4c4"/><rect x="1.6" y="1.2" width="1.1" height="1.1" fill="#fff"/><rect x="3.6" y="1.2" width="1.1" height="1.1" fill="#fff"/><rect x="5.6" y="1.2" width="1.1" height="1.1" fill="#fff"/><path d="M3 4.2 H10 L12.2 6 V13.2 H5.2 L3 11.4 Z" fill="#001f78"/><path d="M3 4.2 H10 L12.2 6 H5.2 Z" fill="#3f63c4"/><rect x="5.2" y="6" width="7" height="7.2" fill="#0431a8"/></svg>
<div class="t" style="left:479.5px;top:328px;letter-spacing:-0.180px;">Cosmic Party Hat</div>
<svg style="left:441px;top:376px" width="16" height="15" viewBox="0 0 16 15"><rect x="2.5" y="3.5" width="11" height="9" fill="url(#pg)" stroke="#7d7d7d"/><path d="M0.3 0.3 L4.6 4.6" stroke="#000" stroke-width="1.1"/><path d="M5.8 2.2 V5.8 H2.2 Z" fill="#000"/><rect x="7.2" y="13" width="2" height="1.6" fill="#00124d"/><rect x="10" y="13" width="2" height="1.6" fill="#00124d"/><rect x="12.8" y="13" width="2" height="1.6" fill="#00124d"/></svg>
<svg style="left:460px;top:376px" width="16" height="16" viewBox="0 0 16 16"><rect x="0.5" y="0.5" width="15" height="15" fill="#fff" stroke="#b8b8b8"/><path d="M15 1.5 V15 H1.5" fill="none" stroke="#8a8a8a" stroke-width="1.6"/><rect x="1" y="1" width="13.4" height="1.6" fill="#c4c4c4"/><rect x="1.6" y="1.2" width="1.1" height="1.1" fill="#fff"/><rect x="3.6" y="1.2" width="1.1" height="1.1" fill="#fff"/><rect x="5.6" y="1.2" width="1.1" height="1.1" fill="#fff"/><path d="M3 4.2 H10 L12.2 6 V13.2 H5.2 L3 11.4 Z" fill="#001f78"/><path d="M3 4.2 H10 L12.2 6 H5.2 Z" fill="#3f63c4"/><rect x="5.2" y="6" width="7" height="7.2" fill="#0431a8"/></svg>
<div class="t" style="left:479.5px;top:375px;letter-spacing:-0.145px;">orange cap</div>
<svg style="left:441px;top:422px" width="16" height="15" viewBox="0 0 16 15"><rect x="2.5" y="3.5" width="11" height="9" fill="url(#pg)" stroke="#7d7d7d"/><path d="M0.3 0.3 L4.6 4.6" stroke="#000" stroke-width="1.1"/><path d="M5.8 2.2 V5.8 H2.2 Z" fill="#000"/><rect x="7.2" y="13" width="2" height="1.6" fill="#00124d"/><rect x="10" y="13" width="2" height="1.6" fill="#00124d"/><rect x="12.8" y="13" width="2" height="1.6" fill="#00124d"/></svg>
<svg style="left:460px;top:422px" width="16" height="16" viewBox="0 0 16 16"><rect x="0.5" y="0.5" width="15" height="15" fill="#fff" stroke="#b8b8b8"/><path d="M15 1.5 V15 H1.5" fill="none" stroke="#8a8a8a" stroke-width="1.6"/><rect x="1" y="1" width="13.4" height="1.6" fill="#c4c4c4"/><rect x="1.6" y="1.2" width="1.1" height="1.1" fill="#fff"/><rect x="3.6" y="1.2" width="1.1" height="1.1" fill="#fff"/><rect x="5.6" y="1.2" width="1.1" height="1.1" fill="#fff"/><path d="M3 4.2 H10 L12.2 6 V13.2 H5.2 L3 11.4 Z" fill="#001f78"/><path d="M3 4.2 H10 L12.2 6 H5.2 Z" fill="#3f63c4"/><rect x="5.2" y="6" width="7" height="7.2" fill="#0431a8"/></svg>
<div class="t" style="left:479.5px;top:422px;letter-spacing:-0.243px;">Pink &amp; Green Hat</div>
<svg style="left:441px;top:474px" width="16" height="15" viewBox="0 0 16 15"><rect x="2.5" y="3.5" width="11" height="9" fill="url(#pg)" stroke="#7d7d7d"/><path d="M0.3 0.3 L4.6 4.6" stroke="#000" stroke-width="1.1"/><path d="M5.8 2.2 V5.8 H2.2 Z" fill="#000"/><rect x="7.2" y="13" width="2" height="1.6" fill="#00124d"/><rect x="10" y="13" width="2" height="1.6" fill="#00124d"/><rect x="12.8" y="13" width="2" height="1.6" fill="#00124d"/></svg>
<svg style="left:460px;top:473px" width="16" height="16" viewBox="0 0 16 16"><rect x="0.5" y="0.5" width="15" height="15" fill="#fff" stroke="#b8b8b8"/><path d="M15 1.5 V15 H1.5" fill="none" stroke="#8a8a8a" stroke-width="1.6"/><rect x="1" y="1" width="13.4" height="1.6" fill="#c4c4c4"/><rect x="1.6" y="1.2" width="1.1" height="1.1" fill="#fff"/><rect x="3.6" y="1.2" width="1.1" height="1.1" fill="#fff"/><rect x="5.6" y="1.2" width="1.1" height="1.1" fill="#fff"/><path d="M3 4.2 H10 L12.2 6 V13.2 H5.2 L3 11.4 Z" fill="#001f78"/><path d="M3 4.2 H10 L12.2 6 H5.2 Z" fill="#3f63c4"/><rect x="5.2" y="6" width="7" height="7.2" fill="#0431a8"/></svg>
<div class="t" style="left:479.5px;top:472px;letter-spacing:-0.219px;">Yellow &amp; Pink Hat</div>
<div class="a" style="left:441px;top:510px;width:2px;height:1px;background:#000"></div>
<svg style="left:0;top:0" width="917" height="511" viewBox="0 0 917 511"><defs><filter id="b1" x="-20%" y="-20%" width="140%" height="140%"><feGaussianBlur stdDeviation="0.5"/></filter><filter id="b2" x="-20%" y="-20%" width="140%" height="140%"><feGaussianBlur stdDeviation="0.8"/></filter><linearGradient id="gy" x1="0" y1="0" x2="0.3" y2="1"><stop offset="0" stop-color="#fbd20a"/><stop offset="1" stop-color="#e3ad00"/></linearGradient><linearGradient id="gp" x1="0" y1="0" x2="0.3" y2="1"><stop offset="0" stop-color="#cf5a8e"/><stop offset="1" stop-color="#b83a72"/></linearGradient><linearGradient id="gb" x1="0" y1="0" x2="0.3" y2="1"><stop offset="0" stop-color="#3556a6"/><stop offset="1" stop-color="#1f3b84"/></linearGradient><linearGradient id="go" x1="0" y1="0" x2="0.3" y2="1"><stop offset="0" stop-color="#f78a1c"/><stop offset="1" stop-color="#e86a06"/></linearGradient></defs><rect x="621" y="172" width="50" height="28" fill="#fff"/><rect x="621" y="201" width="50" height="31" fill="#fff"/><rect x="621" y="233" width="50" height="36" fill="#fff"/><rect x="621" y="270" width="50" height="41" fill="#fff"/><rect x="621" y="312" width="36" height="50" fill="#fff"/><rect x="621" y="363" width="50" height="41" fill="#fff"/><rect x="621" y="405" width="31" height="50" fill="#fff"/><rect x="621" y="456" width="33" height="50" fill="#fff"/><g filter="url(#b1)"><path d="M628.6 180.6 C630 179.6 632 180 632.4 181.6 L632.8 183.4 L631.6 184.2 L631.9 189 L632.3 197.8 L630.4 198 L630 193 L628.6 193.4 L628.2 197.9 L622.4 198.2 C621.6 195 622.6 190.5 624.6 187.6 C625.8 185.6 627.2 183 628.6 180.6 Z" fill="#c39a6a"/><path d="M624 192 C625 189 626.5 187 628 186 L628.4 193.4 L628 197.8 L624 198 Z" fill="#b08858"/><path d="M630.3 173.2 L632 179.6 L627.8 180.2 Z" fill="#8d52ab"/><path d="M633.4 184 L636 183.8 L636.4 186 L636.3 193.8 L635.4 193.8 L635.2 190.5 L634.2 190.5 L634 193.8 L633.2 193.8 Z" fill="#2e261c"/><rect x="633.5" y="186.2" width="2.7" height="3.2" fill="#d8a437"/><path d="M637.6 181.8 L642 181.4 L642.4 184.6 C644 186.6 645.4 188.6 645.6 191 L645.8 195.6 L644.4 195.6 L644 192.6 L641.2 192.8 L640.8 195.6 L638.8 195.6 L638.6 188 Z" fill="#6f727a"/><path d="M638.8 186 L641.4 186 L641.2 192 L638.9 192 Z" fill="#a9acb2"/><path d="M640.1 175.2 L642.2 181.2 L637.4 181.8 Z" fill="#1f7fa0"/><path d="M649 181.4 L655 181 L655.6 185.6 C657.4 187.4 658.8 190 659 193 L658.8 198.2 L657 198.2 L656.6 194 L653.2 194.2 L652.8 198.2 L650.6 198.3 L650.2 190 L648.8 186 Z" fill="#47291a"/><path d="M651.2 188.4 L655.2 188.2 L655.6 193.6 L651.6 194 Z" fill="#e2d3c2"/><path d="M650.6 183.6 L654.2 183.4 L654 186 L651 186.2 Z" fill="#1c120c"/><path d="M652.3 176 L654.4 181 L650.2 181.4 Z" fill="#da4a6c"/><path d="M660.2 186.4 L663.2 186 L663.6 189 L668 189.4 L668.1 195.5 L666.8 195.5 L666.6 192.8 L662.8 193 L662.6 195.5 L661 195.5 L660.8 190 Z" fill="#a8a08a"/><path d="M662 183.4 L663.6 186.2 L660.4 186.6 Z" fill="#3f9a72"/></g><g filter="url(#b1)"><path d="M631.6 222 C631 214 632.5 209.5 636 206.5 C641 202.5 650 201 657 202.8 C664 204.5 669.5 209.5 670.8 215.5 L670.8 226.5 C664 229.5 655 231 647.5 230.8 C641 230.5 636 228.5 631.6 225 Z" fill="url(#gy)"/><path d="M632.5 220.5 C628 222.5 624 226 621.8 229.2 C623.5 230.6 626.5 230.6 629 229.2 C633 226.8 638 225.2 643 224.6 C639 224 635.5 222.6 632.5 220.5 Z" fill="#e9b400"/><path d="M621.8 229.2 C623.5 230.8 626.5 230.6 629.2 229 L628 227.4 C626 228.6 624 229 621.8 229.2Z" fill="#4a3208"/></g><g filter="url(#b1)"><path d="M623.8 259.5 C623.2 252 625 246 629.5 241.5 C633 238 637 236 640.5 236.2 C647 236.8 653 240.5 657.5 246.5 C660.5 250.5 662.3 254.5 663 258 C657 257.2 651 258.2 645.5 260.6 C641 262.6 637 263.4 633 262.6 C629.5 262 626.5 261 623.8 259.5 Z" fill="url(#gp)"/><path d="M633 262.6 C637 263.4 641 262.6 645.5 260.6 C651 258.2 657 257.2 663 258 C665.5 259.4 668 261 669.8 262.6 C664 261.4 658 262.4 652.5 265 C648.5 267 644.5 268 641.5 267.4 C638 266.6 635 264.8 633 262.6 Z" fill="#c4477f"/><path d="M667.5 261 L669.9 262.8 L668.2 263 Z" fill="#40303a"/></g><g filter="url(#b1)"><path d="M621.8 300.8 C621.6 294 622.8 288 626 283.6 C629.5 279 634.5 276 639.8 275.6 C646.5 275.2 652.5 277.6 656.5 282 C660.5 286.6 662.6 293 663 299.6 C657 298.8 651.5 299.4 646.5 301.4 C642 303.2 637.5 304 633 303.4 C629 302.8 625 302 621.8 300.8 Z" fill="url(#gb)"/><path d="M633 303.4 C637.5 304 642 303.2 646.5 301.4 C651.5 299.4 657 298.8 663 299.6 C666 302.4 668.6 305.8 670.3 309.8 C665 306.4 659.5 306 654 307.4 C649 308.6 643.5 308 639 306.4 C636.5 305.6 634.5 304.6 633 303.4 Z" fill="#284894"/><path d="M654 307.6 C659.5 306.3 665 306.6 670.3 310" fill="none" stroke="#d8dce8" stroke-width="0.8"/></g><g filter="url(#b1)"><path d="M638.4 313.8 L654.4 355.2 C650 359.6 630 360.6 623.6 356.2 Z" fill="#e6ea3c"/><path d="M638.4 313.8 L642 323 L636 328 L633.5 327 Z" fill="#c8d850"/><circle cx="633.5" cy="352.5" r="3.4" fill="#fff"/><circle cx="633.5" cy="352.5" r="3.2" fill="none" stroke="#c040b0" stroke-width="1.3"/><circle cx="633.5" cy="352.5" r="1" fill="#c040b0"/><circle cx="650" cy="345" r="3.6" fill="#fff"/><circle cx="650" cy="345" r="3.2" fill="none" stroke="#e0305a" stroke-width="1.4"/><circle cx="650" cy="345" r="1" fill="#e0305a"/><circle cx="641" cy="338" r="2.6" fill="#40c8c8"/><circle cx="645.5" cy="354" r="1.6" fill="#30a8d8"/><circle cx="628" cy="349" r="1.5" fill="#30b060"/><path d="M636.5 322 L640 326 L637 331 L641 333" fill="none" stroke="#e05030" stroke-width="1.1"/><path d="M631 342 L636 345 L633 347" fill="none" stroke="#d040a0" stroke-width="1"/><path d="M643 330 L646 334" fill="none" stroke="#30a060" stroke-width="1.2"/><circle cx="637" cy="318.5" r="1" fill="#e05030"/></g><g filter="url(#b1)"><path d="M630.4 390.8 C630 384 631.5 378 635 373.6 C638.5 369 644 365.8 649.5 365.3 C656 364.8 662 367.2 665.8 371.6 C669 375.4 670 382 669.8 388.8 C668 393 664 397 659 399.4 C652 400.4 645 399.6 639 397.2 C635.5 395.6 632.5 393.4 630.4 390.8 Z" fill="url(#go)"/><path d="M631 389.5 C628 392 625.8 395.4 624.6 398.8 C628 396.4 632 396 636 397.2 C640 398.6 644 400 648.5 400.6 C653 401.2 656.5 400.6 659.2 399.2 C652 400.2 645 399.4 639 397 C635.5 395.4 632.8 392.8 631 389.5 Z" fill="#ef7a10"/><path d="M624.6 398.9 C628 396.5 632 396.1 636 397.3 C640 398.7 644 400.1 648.5 400.7" fill="none" stroke="#f3e6d2" stroke-width="1.1"/></g><g filter="url(#b1)"><path d="M635 416.5 L651.6 448.6 C646 452.4 627 453 621.6 450.4 Z" fill="#f25c9c"/><circle cx="635" cy="411.5" r="6" fill="#92efb3"/><polygon points="636.2,423.0 636.9,425.0 639.1,425.1 637.4,426.4 638.0,428.4 636.2,427.3 634.4,428.4 635.0,426.4 633.3,425.1 635.5,425.0" fill="#fff"/><polygon points="641.0,434.8 641.5,436.3 643.1,436.3 641.9,437.3 642.3,438.8 641.0,437.9 639.7,438.8 640.1,437.3 638.9,436.3 640.5,436.3" fill="#fff"/><polygon points="635.5,439.8 636.3,441.9 638.5,442.0 636.8,443.4 637.4,445.6 635.5,444.3 633.6,445.6 634.2,443.4 632.5,442.0 634.7,441.9" fill="#fff"/><polygon points="628.0,438.2 628.4,439.4 629.7,439.4 628.7,440.2 629.1,441.5 628.0,440.8 626.9,441.5 627.3,440.2 626.3,439.4 627.6,439.4" fill="#fff"/><polygon points="645.0,444.7 645.4,445.9 646.7,445.9 645.7,446.7 646.1,448.0 645.0,447.3 643.9,448.0 644.3,446.7 643.3,445.9 644.6,445.9" fill="#fff"/><polygon points="631.5,447.6 631.8,448.5 632.8,448.6 632.1,449.2 632.3,450.1 631.5,449.6 630.7,450.1 630.9,449.2 630.2,448.6 631.2,448.5" fill="#fff"/><polygon points="638.0,431.3 638.3,432.1 639.1,432.1 638.5,432.7 638.7,433.5 638.0,433.0 637.3,433.5 637.5,432.7 636.9,432.1 637.7,432.1" fill="#fff"/></g><g filter="url(#b1)"><path d="M633.8 464 L642.4 496.8 L625.1 497.2 Z" fill="#e8d03c"/><path d="M633.8 464 L642.4 496.8 L638 497 Z" fill="#d8bc30" opacity="0.6"/><path d="M634 464.2 C638 463 642 463 644 465 C646.5 468 646.5 473 646.6 477 C646.8 480 649 481.6 650.8 483" fill="none" stroke="#c21c9e" stroke-width="1.5" stroke-linecap="round"/><path d="M637.5 465 C640 467 640.8 470 640.6 474 C640.4 478 642 481 645 483.6 C648 486.4 650 489 649.6 492 C649.2 494.6 647.6 496.4 646.8 498.2" fill="none" stroke="#c21c9e" stroke-width="1.6" stroke-linecap="round"/></g></svg>
<div class="a" style="left:436px;top:18px;width:88px;height:25px;border:3px solid #a2151f"></div>
<div class="a" style="left:753px;top:97px;width:147px;height:31px;border:3px solid #a2151f"></div>
<div class="a" style="left:752px;top:195px;width:149px;height:304px;border:3px solid #a2151f"></div>
<svg style="left:0;top:0" width="917" height="511" viewBox="0 0 917 511"><path d="M265.5 402.5 L433.6 63" stroke="#a2151f" stroke-width="4.1" fill="none"/><path d="M438.6 53.2 L438.4 66.1 L428.5 61 Z" fill="#a2151f"/></svg>
</body></html>
